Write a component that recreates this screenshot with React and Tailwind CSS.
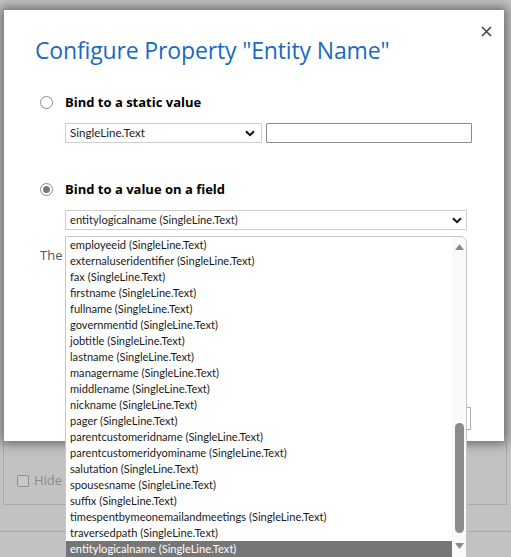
import React from "react";

const items = [
  "employeeid",
  "externaluseridentifier",
  "fax",
  "firstname",
  "fullname",
  "governmentid",
  "jobtitle",
  "lastname",
  "managername",
  "middlename",
  "nickname",
  "pager",
  "parentcustomeridname",
  "parentcustomeridyominame",
  "salutation",
  "spousesname",
  "suffix",
  "timespentbymeonemailandmeetings",
  "traversedpath",
];

function Chevron() {
  return (
    <svg width="10" height="7" viewBox="0 0 10 7" className="shrink-0">
      <path d="M1 1.2 L5 5.2 L9 1.2" stroke="#111" strokeWidth="2" fill="none" />
    </svg>
  );
}

export default function App() {
  return (
    <div className="relative w-[511px] h-[557px] overflow-hidden bg-[#c2c2c2] font-['Open_Sans',sans-serif]">
      {/* background page content */}
      <div className="flex flex-col pt-[442px]">
        <div className="ml-[3px] mr-[4px] h-[63px] border border-t-0 border-[#a9a9a9] flex items-center pl-[13px] pt-[16px]">
          <div className="w-[12px] h-[12px] border border-[#8e8e8e] rounded-[2px] bg-[#c8c8c8]" />
          <span className="ml-[5px] text-[13px] text-[#8a8a8a]">Hide D</span>
        </div>
        <div className="mt-[26px] h-px bg-[#a9a9a9]" />
        <div className="mt-[22px] ml-[350px] w-[110px] h-[2px] bg-[#3a78c2]" />
      </div>

      {/* dialog */}
      <div className="absolute left-[4px] top-[10px] w-[500px] h-[431px] bg-white shadow-[0_0_10px_3px_rgba(0,0,0,0.45)]">
        <div className="absolute right-[12px] top-[16px]">
          <svg width="11" height="11" viewBox="0 0 11 11">
            <path d="M1 1 L10 10 M10 1 L1 10" stroke="#444" strokeWidth="1.6" />
          </svg>
        </div>
        <div className="pl-[31px] pt-[24px]">
          <h1 className="text-[23px] leading-[32px] text-[#1b6ac0] font-normal tracking-[-0.15px]">
            Configure Property "Entity Name"
          </h1>
          <div className="mt-[27px] flex items-center gap-[12px] pl-[5px]">
            <div className="w-[13px] h-[13px] rounded-full border border-[#8a8a8a]" />
            <span className="text-[13px] font-bold text-black leading-[18px]">Bind to a static value</span>
          </div>
          <div className="mt-[12px] ml-[30px] flex gap-[4px]">
            <div className="w-[197px] h-[20px] border border-[#cfcfcf] flex items-center justify-between pl-[4px] pr-[6px] text-[11.6px] text-[#222] font-['Lato',sans-serif]">
              <span>SingleLine.Text</span>
              <Chevron />
            </div>
            <div className="w-[206px] h-[20px] border border-[#8c8c8c] rounded-[1px]" />
          </div>
          <div className="mt-[37px] flex items-center gap-[12px] pl-[5px]">
            <div className="w-[13px] h-[13px] rounded-full border border-[#8a8a8a] flex items-center justify-center">
              <div className="w-[7px] h-[7px] rounded-full bg-[#7a7a7a]" />
            </div>
            <span className="text-[13px] font-bold text-black leading-[18px]">Bind to a value on a field</span>
          </div>
          <div className="mt-[12px] ml-[30px] w-[402px] h-[20px] border border-[#cfcfcf] flex items-center justify-between pl-[4px] pr-[4px] text-[11.2px] text-[#222] font-['Lato',sans-serif]">
            <span>entitylogicalname (SingleLine.Text)</span>
            <Chevron />
          </div>
          <div className="mt-[16px] pl-[5px] text-[13px] text-[#555]">The</div>
        </div>
        <div className="absolute left-[461px] top-[397px] w-[6px] h-[23px] border border-[#b0b0b0]" />
      </div>

      {/* dropdown list */}
      <div className="absolute left-[65px] top-[236px] w-[402px] h-[330px] bg-white border border-[#c6c6c6] rounded-tr-[7px] flex font-['Lato',sans-serif]">
        <div className="flex-1 flex flex-col">
          {items.map((it) => (
            <div key={it} className="h-[16px] leading-[16px] pl-[4px] text-[11.1px] text-[#1a1a1a] whitespace-nowrap">
              {it} (SingleLine.Text)
            </div>
          ))}
          <div className="h-[16px] leading-[16px] pl-[4px] text-[11.1px] text-white bg-[#767676] whitespace-nowrap">
            entitylogicalname (SingleLine.Text)
          </div>
        </div>
        <div className="w-[14px] bg-[#fafafa] flex flex-col items-center rounded-tr-[7px]">
          <svg width="9" height="6" viewBox="0 0 9 6" className="mt-[7px]">
            <path d="M0 6 L4.5 0 L9 6 Z" fill="#8a8a8a" />
          </svg>
          <div className="mt-[173px] w-[9px] h-[110px] rounded-full bg-[#8b8b8b]" />
          <svg width="9" height="6" viewBox="0 0 9 6" className="mt-[10px]">
            <path d="M0 0 L4.5 6 L9 0 Z" fill="#8a8a8a" />
          </svg>
        </div>
      </div>
    </div>
  );
}
